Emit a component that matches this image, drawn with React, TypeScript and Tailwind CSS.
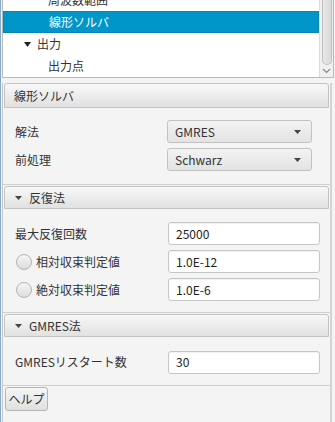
import React from "react";

const font = { fontFamily: '"Noto Sans CJK JP", "Noto Sans", sans-serif' };

function Tri({ className = "", w = 8, h = 5 }: { className?: string; w?: number; h?: number }) {
  return (
    <svg width={w} height={h} viewBox={`0 0 ${w} ${h}`} className={className}>
      <path d={`M0 0 H${w} L${w / 2} ${h} Z`} fill="currentColor" />
    </svg>
  );
}

function Header({ title, arrow = true, tall = false }: { title: string; arrow?: boolean; tall?: boolean }) {
  return (
    <div
      className={`mx-px flex items-center border border-[#c4c4c4] rounded-t-[3px] bg-gradient-to-b from-[#f8f8f8] to-[#e1e1e1] text-[12px] text-[#333] ${
        tall ? "h-[25px] pl-[9px]" : "h-[23px] pl-[10px]"
      }`}
    >
      {arrow && <Tri w={7} h={4} className="text-[#444] mr-[7px]" />}
      <span>{title}</span>
    </div>
  );
}

function Combo({ value }: { value: string }) {
  return (
    <div className="w-[145px] h-[23px] rounded-[3px] border border-[#c2c2c2] bg-gradient-to-b from-[#f3f3f3] to-[#e3e3e3] flex items-center pl-[7px] pr-[10px] text-[12px] text-[#333]">
      <span className="flex-1">{value}</span>
      <Tri w={7} h={4} className="text-[#444]" />
    </div>
  );
}

function Field({ value }: { value: string }) {
  return (
    <div className="w-[152px] h-[23px] rounded-[3px] border border-[#c6c6c6] bg-white shadow-[inset_0_1px_1px_rgba(0,0,0,0.06)] flex items-center pl-[7px] text-[12px] text-[#222]">
      {value}
    </div>
  );
}

function Radio() {
  return (
    <div className="w-[16px] h-[16px] rounded-full border border-[#b4b4b4] bg-gradient-to-b from-[#f6f6f6] to-[#dcdcdc] mr-[4px]" />
  );
}

export default function App() {
  return (
    <div style={font} className="w-[335px] h-[422px] overflow-hidden bg-[#f4f4f4] border-l border-[#86a9cc] flex flex-col">
      {/* Tree */}
      <div className="ml-px w-[332px] h-[78px] border border-t-0 border-[#b9b9b9] bg-white flex overflow-hidden">
        <div className="flex-1 overflow-hidden pt-px">
          <div className="-mt-[12px] text-[12px] text-[#333]">
            <div className="h-[22px] flex items-center pl-[45px]">周波数範囲</div>
            <div className="h-[22px] flex items-center pl-[45px] bg-[#0096c9] border border-[#0a86b3] text-white">線形ソルバ</div>
            <div className="h-[22px] flex items-center pl-[21px]">
              <Tri w={7} h={5} className="text-[#222] mr-[6px]" />
              <span>出力</span>
            </div>
            <div className="h-[22px] flex items-center pl-[45px]">出力点</div>
          </div>
        </div>
        <div className="w-[14px] h-full bg-[#f0f0f0] border-l border-[#dcdcdc] flex flex-col items-center">
          <div className="mt-0 w-[10px] h-[65px] rounded-b-[5px] bg-gradient-to-r from-[#e8e8e8] to-[#dadada] border border-[#c0c0c0] border-t-0" />
          <svg width="9" height="6" viewBox="0 0 9 6" className="mt-[3px]">
            <path d="M1 1 L4.5 4.5 L8 1" fill="none" stroke="#8a8a8a" strokeWidth="1.2" />
          </svg>
        </div>
      </div>

      {/* Accordion */}
      <div className="mt-[5px] ml-px w-[330px] flex-1 border-l border-r-2 border-l-[#c8c8c8] border-r-[#d4d4d4] flex flex-col">
        <Header title="線形ソルバ" arrow={false} tall />
        <div className="border-b border-[#cfcfcf] pl-[12px] pt-[12px] pb-[13px] flex flex-col gap-[5px] text-[12px] text-[#333]">
          <div className="flex items-center h-[23px]">
            <span className="w-[152px]">解法</span>
            <Combo value="GMRES" />
          </div>
          <div className="flex items-center h-[23px]">
            <span className="w-[152px]">前処理</span>
            <Combo value="Schwarz" />
          </div>
        </div>

        <div className="mt-px" />
        <Header title="反復法" />
        <div className="border-b border-[#cfcfcf] pl-[12px] pt-[13px] pb-[11px] flex flex-col gap-[5px] text-[12px] text-[#333]">
          <div className="flex items-center h-[23px]">
            <span className="w-[153px]">最大反復回数</span>
            <Field value="25000" />
          </div>
          <div className="flex items-center h-[23px]">
            <div className="w-[153px] flex items-center pl-px">
              <Radio />
              <span>相対収束判定値</span>
            </div>
            <Field value="1.0E-12" />
          </div>
          <div className="flex items-center h-[23px]">
            <div className="w-[153px] flex items-center pl-px">
              <Radio />
              <span>絶対収束判定値</span>
            </div>
            <Field value="1.0E-6" />
          </div>
        </div>

        <div className="mt-px" />
        <Header title="GMRES法" />
        <div className="border-b border-[#cfcfcf] pl-[12px] pt-[13px] pb-[11px] flex flex-col text-[12px] text-[#333]">
          <div className="flex items-center h-[24px]">
            <span className="w-[153px]">GMRESリスタート数</span>
            <Field value="30" />
          </div>
        </div>

        <div className="pl-[2px] pt-px">
          <div className="w-[43px] h-[24px] rounded-[3px] border border-[#b5b5b5] bg-gradient-to-b from-[#f6f6f6] to-[#e0e0e0] flex items-center justify-center text-[12px] text-[#333]">
            ヘルプ
          </div>
        </div>
      </div>
    </div>
  );
}
